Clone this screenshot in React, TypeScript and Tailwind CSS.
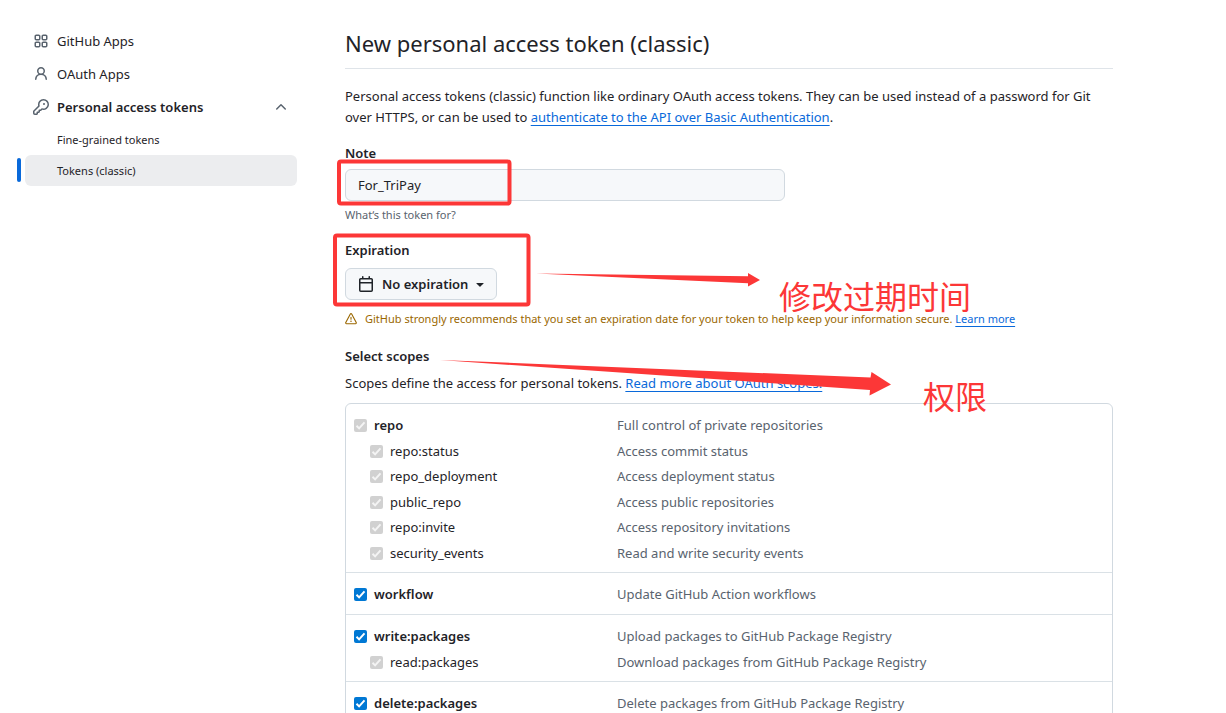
import type { ReactNode } from 'react'

const ICONS = {
  apps: 'M1.5 3.25c0-.966.784-1.75 1.75-1.75h2.5c.966 0 1.75.784 1.75 1.75v2.5A1.75 1.75 0 0 1 5.75 7.5h-2.5A1.75 1.75 0 0 1 1.5 5.75Zm7 0c0-.966.784-1.75 1.75-1.75h2.5c.966 0 1.75.784 1.75 1.75v2.5a1.75 1.75 0 0 1-1.75 1.75h-2.5A1.75 1.75 0 0 1 8.5 5.75Zm-7 7c0-.966.784-1.75 1.75-1.75h2.5c.966 0 1.75.784 1.75 1.75v2.5a1.75 1.75 0 0 1-1.75 1.75h-2.5a1.75 1.75 0 0 1-1.75-1.75Zm7 0c0-.966.784-1.75 1.75-1.75h2.5c.966 0 1.75.784 1.75 1.75v2.5a1.75 1.75 0 0 1-1.75 1.75h-2.5a1.75 1.75 0 0 1-1.75-1.75ZM3.25 3a.25.25 0 0 0-.25.25v2.5c0 .138.112.25.25.25h2.5A.25.25 0 0 0 6 5.75v-2.5A.25.25 0 0 0 5.75 3Zm7 0a.25.25 0 0 0-.25.25v2.5c0 .138.112.25.25.25h2.5a.25.25 0 0 0 .25-.25v-2.5a.25.25 0 0 0-.25-.25Zm-7 7a.25.25 0 0 0-.25.25v2.5c0 .138.112.25.25.25h2.5a.25.25 0 0 0 .25-.25v-2.5a.25.25 0 0 0-.25-.25Zm7 0a.25.25 0 0 0-.25.25v2.5c0 .138.112.25.25.25h2.5a.25.25 0 0 0 .25-.25v-2.5a.25.25 0 0 0-.25-.25Z',
  person:
    'M10.561 8.073a6.005 6.005 0 0 1 3.432 5.142.75.75 0 1 1-1.498.07 4.5 4.5 0 0 0-8.99 0 .75.75 0 0 1-1.498-.07 6.004 6.004 0 0 1 3.431-5.142 3.999 3.999 0 1 1 5.123 0ZM10.5 5a2.5 2.5 0 1 0-5 0 2.5 2.5 0 0 0 5 0Z',
  key: 'M10.5 0a5.499 5.499 0 1 1-1.288 10.848l-.932.932a.749.749 0 0 1-.53.22H7v.75a.749.749 0 0 1-.22.53l-.5.5a.749.749 0 0 1-.53.22H5v.75a.749.749 0 0 1-.22.53l-.5.5a.749.749 0 0 1-.53.22h-2A1.75 1.75 0 0 1 0 14.25v-2c0-.199.079-.389.22-.53l4.932-4.932A5.5 5.5 0 0 1 10.5 0Zm-4 5.5c-.001.431.069.86.205 1.269a.75.75 0 0 1-.181.768L1.5 12.56v1.69c0 .138.112.25.25.25h1.69l.06-.06v-1.19a.75.75 0 0 1 .75-.75h1.19l.06-.06v-1.19a.75.75 0 0 1 .75-.75h1.19l1.023-1.025a.75.75 0 0 1 .768-.18A4 4 0 1 0 6.5 5.5ZM11 6a1 1 0 1 1 0-2 1 1 0 0 1 0 2Z',
  chevronUp:
    'M3.22 10.53a.749.749 0 0 1 0-1.06l4.25-4.25a.749.749 0 0 1 1.06 0l4.25 4.25a.749.749 0 1 1-1.06 1.06L8 6.811 4.28 10.53a.749.749 0 0 1-1.06 0Z',
  calendar:
    'M4.75 0a.75.75 0 0 1 .75.75V2h5V.75a.75.75 0 0 1 1.5 0V2h1.25c.966 0 1.75.784 1.75 1.75v10.5A1.75 1.75 0 0 1 13.25 16H2.75A1.75 1.75 0 0 1 1 14.25V3.75C1 2.784 1.784 2 2.75 2H4V.75A.75.75 0 0 1 4.75 0ZM2.5 7.5v6.75c0 .138.112.25.25.25h10.5a.25.25 0 0 0 .25-.25V7.5Zm10.75-4H2.75a.25.25 0 0 0-.25.25V6h11V3.75a.25.25 0 0 0-.25-.25Z',
  triangleDown:
    'm4.427 7.427 3.396 3.396a.25.25 0 0 0 .354 0l3.396-3.396A.25.25 0 0 0 11.396 7H4.604a.25.25 0 0 0-.177.427Z',
  alert:
    'M6.457 1.047c.659-1.234 2.427-1.234 3.086 0l6.082 11.378A1.75 1.75 0 0 1 14.082 15H1.918a1.75 1.75 0 0 1-1.543-2.575Zm1.763.707a.25.25 0 0 0-.44 0L1.698 13.132a.25.25 0 0 0 .22.368h12.164a.25.25 0 0 0 .22-.368Zm.53 3.996v2.5a.75.75 0 0 1-1.5 0v-2.5a.75.75 0 0 1 1.5 0ZM9 11a1 1 0 1 1-2 0 1 1 0 0 1 2 0Z',
}

type IconName = keyof typeof ICONS

function Icon({ name, className = 'size-4' }: { name: IconName; className?: string }) {
  return (
    <svg viewBox="0 0 16 16" fill="currentColor" aria-hidden="true" className={`shrink-0 ${className}`}>
      <path d={ICONS[name]} />
    </svg>
  )
}

function TextLink({ children }: { children: ReactNode }) {
  return (
    <a href="#" className="text-[#0969da] underline underline-offset-3">
      {children}
    </a>
  )
}

type Scope = { name: string; description: string; disabled?: boolean }
type ScopeGroup = Scope & { children?: Scope[] }

const SCOPES: ScopeGroup[] = [
  {
    name: 'repo',
    description: 'Full control of private repositories',
    disabled: true,
    children: [
      { name: 'repo:status', description: 'Access commit status' },
      { name: 'repo_deployment', description: 'Access deployment status' },
      { name: 'public_repo', description: 'Access public repositories' },
      { name: 'repo:invite', description: 'Access repository invitations' },
      { name: 'security_events', description: 'Read and write security events' },
    ],
  },
  { name: 'workflow', description: 'Update GitHub Action workflows' },
  {
    name: 'write:packages',
    description: 'Upload packages to GitHub Package Registry',
    children: [{ name: 'read:packages', description: 'Download packages from GitHub Package Registry' }],
  },
  { name: 'delete:packages', description: 'Delete packages from GitHub Package Registry' },
]

function Checkbox({ disabled }: { disabled?: boolean }) {
  return (
    <span className="grid shrink-0 *:col-start-1 *:row-start-1">
      <input
        type="checkbox"
        defaultChecked
        disabled={disabled}
        className="peer size-[13px] appearance-none rounded-xs border border-[#767676] checked:border-0 checked:bg-[#0078d4] disabled:checked:bg-[#d1d1d1]"
      />
      <svg
        viewBox="0 0 13 13"
        fill="none"
        stroke="currentColor"
        strokeWidth="2"
        aria-hidden="true"
        className="pointer-events-none invisible size-[13px] text-white peer-checked:visible peer-disabled:text-[#f4f4f4]"
      >
        <path d="m2.500 6.800 2.600 2.600 5.400-6" />
      </svg>
    </span>
  )
}

function ScopeLine({ scope, nested = false }: { scope: Scope; nested?: boolean }) {
  return (
    <div className="flex h-full items-center">
      <label
        className={`flex w-[263px] shrink-0 items-center gap-[7px] ${nested ? 'pl-4' : 'font-semibold'}`}
      >
        <Checkbox disabled={nested || scope.disabled} />
        {scope.name}
      </label>
      <span className="text-[#59636e]">{scope.description}</span>
    </div>
  )
}

function Sidebar() {
  return (
    <nav aria-label="Developer settings" className="w-[272px] shrink-0 pt-[25px]">
      <ul>
        <li>
          <a href="#" className="flex h-[33px] items-center gap-2 px-2">
            <Icon name="apps" className="mb-[2px] size-4 text-[#59636e]" />
            GitHub Apps
          </a>
        </li>
        <li>
          <a href="#" className="flex h-[33px] items-center gap-2 px-2">
            <Icon name="person" className="mb-[2px] size-4 text-[#59636e]" />
            OAuth Apps
          </a>
        </li>
        <li>
          <button type="button" className="flex h-[33px] w-full items-center gap-2 px-2 font-semibold">
            <Icon name="key" className="mb-[2px] size-4 text-[#59636e]" />
            Personal access tokens
            <Icon name="chevronUp" className="mb-[2px] ml-auto size-4 text-[#59636e]" />
          </button>
          <ul className="text-[11px]">
            <li>
              <a href="#" className="flex h-[31px] items-center pl-8">
                Fine-grained tokens
              </a>
            </li>
            <li className="relative">
              <span className="absolute top-[3px] -left-2 h-6 w-1 rounded-md bg-[#0969da]" />
              <a
                href="#"
                aria-current="page"
                className="flex h-[31px] items-center rounded-md bg-[#ecedef] pl-8"
              >
                Tokens (classic)
              </a>
            </li>
          </ul>
        </li>
      </ul>
    </nav>
  )
}

// Red marks drawn over the form
function Annotations() {
  return (
    <div className="pointer-events-none absolute top-0 left-0 text-[#fc3737]">
      <svg width="1000" height="450" fill="currentColor" aria-hidden="true">
        <rect x="339" y="161.5" width="170.5" height="42" rx="2" fill="none" stroke="currentColor" strokeWidth="4" />
        <rect x="335" y="235.5" width="193.5" height="69" rx="2" fill="none" stroke="currentColor" strokeWidth="4" />
        <path d="M536 273.5 748 276.2V273L760 280 748 286.5V283.2Z" />
        <path d="M440 360 870.5 377.5 871.5 372 891 384.5 869.5 395.5 870 390Z" />
      </svg>
      <span className="absolute top-[273px] left-[779px] text-[32px] leading-12 whitespace-nowrap">
        修改过期时间
      </span>
      <span className="absolute top-[373px] left-[923px] text-[32px] leading-12 whitespace-nowrap">权限</span>
    </div>
  )
}

export default function App() {
  return (
    <div className="relative flex h-screen gap-12 overflow-hidden bg-white pr-[113px] pl-[25px] font-['Noto_Sans','Noto_Sans_CJK_SC',sans-serif] text-[13px] leading-[21px] text-[#1f2328]">
      <Sidebar />

      <main className="min-w-0 flex-1 pt-[26px]">
        <h1 className="border-b border-[#d1d9e0]/70 pb-2 text-[22px] leading-[34px]">
          New personal access token (classic)
        </h1>

        <form>
          <p className="mt-[17px]">
            Personal access tokens (classic) function like ordinary OAuth access tokens. They can be used
            instead of a password for Git over HTTPS, or can be used to{' '}
            <TextLink>authenticate to the API over Basic Authentication</TextLink>.
          </p>

          <div className="mt-[15px]">
            <label htmlFor="note" className="block font-semibold">
              Note
            </label>
            <input
              id="note"
              type="text"
              defaultValue="For_TriPay"
              className="mt-[5px] block h-8 w-full max-w-[440px] rounded-md border border-[#d1d9e0] bg-[#f6f8fa] px-3"
            />
            <p className="mt-[3px] text-[11px] text-[#59636e]">What‘s this token for?</p>
          </div>

          <div className="mt-[15px]">
            <span id="expiration" className="block font-semibold">
              Expiration
            </span>
            <button
              type="button"
              aria-describedby="expiration"
              className="mt-[7px] flex h-8 items-center gap-2 rounded-md border border-[#d1d9e0] bg-[#f6f8fa] px-3 font-semibold"
            >
              <Icon name="calendar" />
              No expiration
              <Icon name="triangleDown" className="-mx-1 size-4" />
            </button>
            <p className="mt-2 flex items-center gap-2 text-[11px] text-[#9a6700]">
              <Icon name="alert" className="size-3" />
              <span>
                GitHub strongly recommends that you set an expiration date for your token to help keep your
                information secure. <TextLink>Learn more</TextLink>
              </span>
            </p>
          </div>

          <h2 className="mt-[17px] font-semibold">Select scopes</h2>
          <p className="mt-[6px]">
            Scopes define the access for personal tokens.{' '}
            <TextLink>Read more about OAuth scopes.</TextLink>
          </p>

          <ul className="mt-[9px] rounded-t-md border border-[#d1d9e0]">
            {SCOPES.map((group) => (
              <li
                key={group.name}
                className="min-h-[42px] border-b border-[#d1d9e0]/80 px-2 pt-2 pb-[6px] last:border-b-0"
              >
                <div className="h-[26px]">
                  <ScopeLine scope={group} />
                </div>
                {group.children && (
                  <ul>
                    {group.children.map((scope) => (
                      <li key={scope.name} className="odd:h-[26px] even:h-[25px]">
                        <ScopeLine scope={scope} nested />
                      </li>
                    ))}
                  </ul>
                )}
              </li>
            ))}
          </ul>
        </form>
      </main>

      <Annotations />
    </div>
  )
}
